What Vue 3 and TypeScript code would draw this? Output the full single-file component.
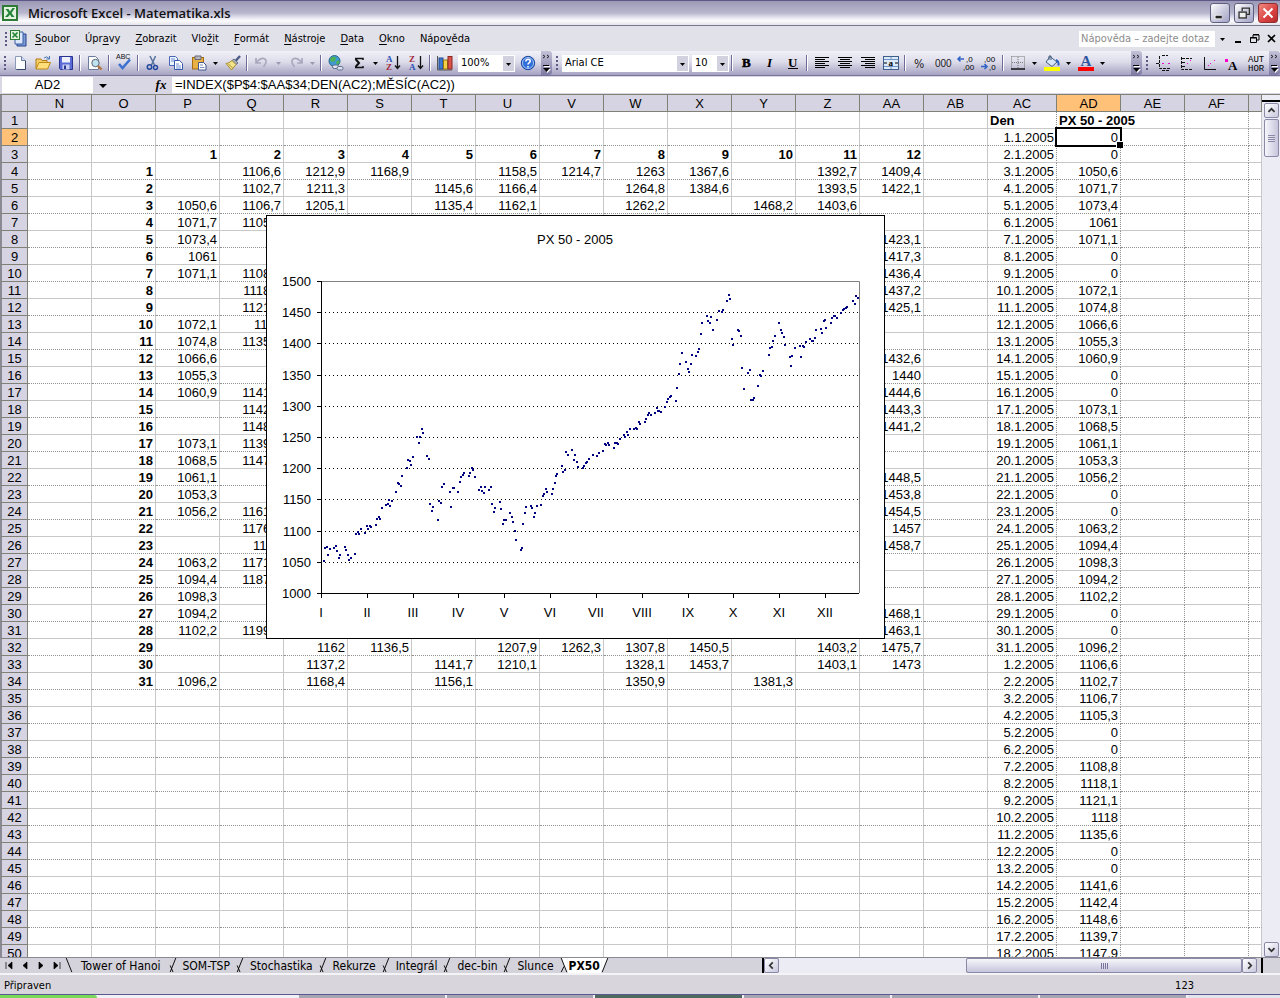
<script setup lang="ts">
interface Tool { kind: 'btn' | 'sep' | 'drop' | 'zoom' | 'font' | 'size' | 'more' | 'grip' | 'fill'; icon?: string; label?: string; dim?: boolean }

const b = (icon: string, label: string): Tool => ({ kind: 'btn', icon, label })
const sep: Tool = { kind: 'sep' }
const drop = (label: string, dim = false): Tool => ({ kind: 'drop', label, dim })

const tools: Tool[] = [
  { kind: 'grip' },
  b('new', 'Nový'), b('open', 'Otevřít'), b('save', 'Uložit'), sep,
  b('preview', 'Náhled'), sep, b('spell', 'Pravopis'), sep,
  b('cut', 'Vyjmout'), b('copy', 'Kopírovat'), b('paste', 'Vložit'), drop('Možnosti vložení'),
  b('brush', 'Kopírovat formát'), sep,
  b('undo', 'Zpět'), drop('Historie zpět', true), b('redo', 'Znovu'), drop('Historie znovu', true), sep,
  b('globe', 'Odkaz'), b('sum', 'Součet'), drop('Funkce'), b('az', 'Seřadit vzestupně'), b('za', 'Seřadit sestupně'), sep,
  b('chart', 'Průvodce grafem'), { kind: 'zoom' }, b('help', 'Nápověda'), { kind: 'more', label: 'Možnosti panelu Standardní' },
  { kind: 'grip' }, { kind: 'font' }, { kind: 'size' }, sep,
  b('bold', 'Tučné'), b('italic', 'Kurzíva'), b('underline', 'Podtržené'), sep,
  b('left', 'Vlevo'), b('center', 'Na střed'), b('right', 'Vpravo'), b('merge', 'Sloučit'), sep,
  b('percent', 'Procenta'), b('thousand', 'Tisíce'), b('decUp', 'Přidat desetinné místo'), b('decDown', 'Odebrat desetinné místo'), sep,
  b('border', 'Ohraničení'), drop('Styly ohraničení'), b('bucket', 'Barva výplně'), drop('Barvy výplně'),
  b('color', 'Barva písma'), drop('Barvy písma'), { kind: 'fill' }, { kind: 'more', label: 'Možnosti panelu Formát' },
  { kind: 'grip' }, b('plotA', 'Osy'), b('plotB', 'Mřížka'), b('plotC', 'Bez mřížky'), b('plotD', 'Popisek'), b('author', 'Autor'),
  { kind: 'more', label: 'Možnosti panelu' },
]

const sans = 'font-family="Liberation Sans, sans-serif"'
const serif = 'font-family="Liberation Serif, serif"'
const narrow = 'font-family="DejaVu Sans Condensed, sans-serif"'
const icons: Record<string, string> = {
  excel: '<rect x="1" y="1" width="14" height="14" fill="#e4f3df" stroke="#2d7b35" stroke-width="2"/><path d="M3.500 4h3L8 6.500 10.500 3H13L9.500 8l3 4h-3L8 9.500 6 12H3l3.500-4z" fill="#23853a"/>',
  book: '<path d="M7 4h9v12H7z" fill="#7d9bd8" stroke="#24428a"/><path d="M5 2h8v12H5z" fill="#dbe7fb" stroke="#3b5da5"/><rect x="0.500" y="0.500" width="9" height="9" fill="#e4f3df" stroke="#2d7b35"/><path d="M2.500 2.500l5 5M7.500 2.500l-5 5" stroke="#23853a" stroke-width="1.700"/>',
  new: '<path d="M3.500 1.500h6l4 4v9h-10z" fill="#fbfdff" stroke="#8c9ab8"/><path d="M9.500 1.500v4h4" fill="#cddcf2" stroke="#6b7b9b"/><path d="M13.500 6v8.500h-9" fill="none" stroke="#354569"/>',
  open: '<path d="M1 13.500V4h5l1 1.500h5V8" fill="#f6cf67" stroke="#b27a15"/><path d="M1 14l3-6.500h11.500L12.500 14z" fill="#ffdf7a" stroke="#c08618"/><path d="M9 3q3-2.500 5 .5M14.500 1v3h-3" fill="none" stroke="#4a74b4"/>',
  save: '<path d="M1.500 1.500h13v13h-12l-1-1z" fill="#5b6bd6" stroke="#2a3490"/><rect x="4" y="2" width="8" height="5.500" fill="#eef1fd"/><rect x="4.500" y="9.500" width="7" height="5" fill="#c9cff0"/><rect x="6" y="10.500" width="2" height="3.500" fill="#2a3490"/>',
  preview: '<path d="M1.500 1.500h7l3 3v10h-10z" fill="#fff" stroke="#6b7b9b"/><circle cx="8.500" cy="8" r="3.700" fill="#bfe3ef" stroke="#5c6675"/><path d="M11 11l3.500 3.500" stroke="#b5763b" stroke-width="2.400"/>',
  spell: `<text x="0" y="4" font-size="7" ${sans} fill="#111">ABC</text><path d="M3 9l3.500 4L14 4.500" fill="none" stroke="#3f72d0" stroke-width="2.600"/>`,
  cut: '<path d="M5 1l4.500 9M10.500 1L6.500 10" stroke="#56749d" stroke-width="1.500"/><circle cx="4.500" cy="12" r="2.200" fill="none" stroke="#22489d" stroke-width="1.500"/><circle cx="10.500" cy="12.500" r="2" fill="none" stroke="#22489d" stroke-width="1.500"/>',
  copy: '<path d="M1.500 1.500h6l2 2v7h-8z" fill="#eef4ff" stroke="#4766b5"/><path d="M6.500 5.500h5l3 3v6h-8z" fill="#fff" stroke="#3558ac"/><path d="M3 4h4M3 6h3M8 9h3M8 11h5M8 13h5" stroke="#6f8fd4"/>',
  paste: '<rect x="1.500" y="2.500" width="11" height="11.500" fill="#e9b044" stroke="#a36c13"/><path d="M4 1h6v3.500H4z" fill="#b8b8c4" stroke="#676775"/><path d="M7.500 7.500h5l2.500 2.500v5H7.500z" fill="#fff" stroke="#41578d"/><path d="M9 10h3M9 12.500h4.500" stroke="#7d8fbd"/>',
  brush: '<path d="M15 1l-4.500 5" stroke="#4b5b85" stroke-width="2.400"/><path d="M9 4l4 4-2 1.500-4-4z" fill="#aab0bf" stroke="#666f80"/><path d="M7 5.500L11 9.500 6.500 15 1 8.500q3 0 6-3z" fill="#f4e48a" stroke="#a58f31"/><path d="M3.500 9l4 4" stroke="#a58f31"/>',
  undo: '<path d="M2 3v5h5M2.500 7.500Q6 3 10 3.500q4.500 2-.5 8.500" fill="none" stroke="#a9a8bd" stroke-width="1.700"/>',
  redo: '<path d="M14 3v5H9M13.500 7.500Q10 3 6 3.500q-4.500 2 .5 8.500" fill="none" stroke="#a9a8bd" stroke-width="1.700"/>',
  globe: '<circle cx="6.500" cy="6" r="5.500" fill="#3f9ad1" stroke="#286c87"/><path d="M2.500 3q3.500-2.500 5.500 0l-1 3-3 1-2-2zM8 7l3-2 .5 3-2.500 2z" fill="#4fb155"/><rect x="4.500" y="10" width="6" height="3.500" rx="1.700" fill="#dde3ef" stroke="#5d6d8c"/><rect x="9" y="11.500" width="6" height="3.500" rx="1.700" fill="#dde3ef" stroke="#5d6d8c"/>',
  sum: '<path d="M4 3.500h8V5M12 11v1.500H4" fill="none" stroke="#111" stroke-width="1.500"/><path d="M4.500 4L8 8l-3.500 4" fill="none" stroke="#111" stroke-width="2"/>',
  az: `<text x="1" y="7" font-size="9" font-weight="bold" ${serif} fill="#2b50b5">A</text><text x="1" y="15" font-size="9" font-weight="bold" ${serif} fill="#a32d3e">Z</text><path d="M12.500 1v12M10 10.500l2.500 3 2.500-3" fill="none" stroke="#111" stroke-width="1.300"/>`,
  za: `<text x="1" y="7" font-size="9" font-weight="bold" ${serif} fill="#a32d3e">Z</text><text x="1" y="15" font-size="9" font-weight="bold" ${serif} fill="#2b50b5">A</text><path d="M12.500 1v12M10 10.500l2.500 3 2.500-3" fill="none" stroke="#111" stroke-width="1.300"/>`,
  chart: '<path d="M.5 1v14H15" fill="none" stroke="#555"/><rect x="2" y="3" width="4" height="11" fill="#3e7bd0" stroke="#234a8d"/><rect x="6.500" y="5" width="4" height="9" fill="#f3cf45" stroke="#9b7a12"/><rect x="11" y="1.500" width="4" height="12.500" fill="#d8534a" stroke="#8d2720"/>',
  help: '<circle cx="8" cy="8" r="6.700" fill="#2f6ed8" stroke="#1c479c"/><circle cx="8" cy="8" r="5.500" fill="none" stroke="#a8c5f5"/><path d="M5.800 6.500Q6 4.300 8.200 4.300q2.200.2 2 2-.2 1-1.500 1.800-.7.500-.7 1.400M8 11v1.500" fill="none" stroke="#fff" stroke-width="1.600"/>',
  bold: `<text x="3" y="12" font-size="13" font-weight="bold" ${serif} stroke="#000" stroke-width="0.500">B</text>`,
  italic: `<text x="5" y="12" font-size="13" font-weight="bold" font-style="italic" ${serif}>I</text>`,
  underline: `<text x="3" y="12" font-size="13" font-weight="bold" ${serif}>U</text><path d="M3 13.500h10" stroke="#000"/>`,
  left: '<path d="M1 2.500h14M1 4.500h10M1 6.500h14M1 8.500h10M1 10.500h14M1 12.500h10" stroke="#000"/>',
  center: '<path d="M1 2.500h14M3 4.500h10M1 6.500h14M3 8.500h10M1 10.500h14M3 12.500h10" stroke="#000"/>',
  right: '<path d="M1 2.500h14M5 4.500h10M1 6.500h14M5 8.500h10M1 10.500h14M5 12.500h10" stroke="#000"/>',
  merge: `<rect x=".5" y="1.500" width="15" height="13" fill="#dce9f8" stroke="#3e5f8e"/><path d="M1 4.500h14M1 11.500h14M8 2v3M8 11v3" stroke="#6d94c4"/><text x="5.500" y="10.500" font-size="9" font-weight="bold" ${serif}>a</text><path d="M1 8h3M12 8h3" stroke="#000"/>`,
  percent: `<text x="2" y="13" font-size="12" ${narrow} fill="#222">%</text>`,
  thousand: `<text x="0" y="12" font-size="10" ${sans} fill="#222">000</text>`,
  decUp: `<text x="8" y="7" font-size="8" ${sans}>,0</text><text x="5" y="15" font-size="8" ${sans}>,00</text><path d="M0 4h6M2.500 1.500L0 4l2.500 2.500" fill="none" stroke="#2f62c4" stroke-width="1.500"/>`,
  decDown: `<text x="3" y="7" font-size="8" ${sans}>,00</text><text x="8" y="15" font-size="8" ${sans}>,0</text><path d="M0 11.500h6M3.500 9L6 11.500 3.500 14" fill="none" stroke="#2f62c4" stroke-width="1.500"/>`,
  border: '<path d="M1.500 1.500h13v12M1.500 1.500v12M8 2v11M2 7.500h12" fill="none" stroke="#777" stroke-dasharray="1 1"/><path d="M1 14h14" stroke="#111" stroke-width="1.500"/>',
  bucket: '<path d="M6 1.500l7 5.500-5 4.500L2 7z" fill="#d9e6f6" stroke="#47607f"/><path d="M5 5V1h2v4" fill="none" stroke="#47607f"/><path d="M12 5q3 1 2.500 5.500" fill="none" stroke="#2c62c2" stroke-width="2"/><rect y="12" width="16" height="4" fill="#ff0"/>',
  color: `<text x="2.500" y="11" font-size="15" font-weight="bold" ${serif} fill="#30549d">A</text><rect y="12" width="16" height="4" fill="#f00"/>`,
  plotA: '<path d="M3.500 1v12.500H15M0 8.500h3M6 .5h6M6 15.500h7" fill="none" stroke="#111" stroke-dasharray="3 1"/><path d="M6 8.500h2M12 8.500h2" stroke="#e010d0"/>',
  plotB: '<path d="M2.500 2v12.500H14M3 3.500h10M3 7.500h3M3 11.500h3" fill="none" stroke="#111" stroke-dasharray="3 1"/><path d="M8 8.500h1M11 5.500h1" stroke="#e010d0"/>',
  plotC: '<path d="M2.500 2v12.500H14" fill="none" stroke="#111"/><path d="M6 10.500h1M8 8.500h1M12 5.500h1" stroke="#e010d0"/>',
  plotD: `<rect x="0" y="4" width="3" height="3" fill="#f0c"/><text x="3" y="15" font-size="13" font-weight="bold" ${serif}>A</text>`,
  author: `<text x="0" y="7" font-size="9" font-family="Liberation Mono, monospace">AUT</text><text x="0" y="16" font-size="9" font-family="Liberation Mono, monospace">HOR</text>`,
}

const menu: [string, string, string][] = [
  ['', 'S', 'oubor'], ['Úpr', 'a', 'vy'], ['', 'Z', 'obrazit'], ['Vlo', 'ž', 'it'], ['', 'F', 'ormát'],
  ['', 'N', 'ástroje'], ['', 'D', 'ata'], ['', 'O', 'kno'], ['Nápo', 'v', 'ěda'],
]

const columns = ['N', 'O', 'P', 'Q', 'R', 'S', 'T', 'U', 'V', 'W', 'X', 'Y', 'Z', 'AA', 'AB', 'AC', 'AD', 'AE', 'AF', '']
const months = ['P', 'Q', 'R', 'S', 'T', 'U', 'V', 'W', 'X', 'Y', 'Z', 'AA']

// Closing values by month column; keys are days of the month.
const quotes: Record<string, Record<number, string>> = {
  P: { 3: '1050,6', 4: '1071,7', 5: '1073,4', 6: '1061', 7: '1071,1', 10: '1072,1', 11: '1074,8', 12: '1066,6', 13: '1055,3', 14: '1060,9', 17: '1073,1', 18: '1068,5', 19: '1061,1', 20: '1053,3', 21: '1056,2', 24: '1063,2', 25: '1094,4', 26: '1098,3', 27: '1094,2', 28: '1102,2', 31: '1096,2' },
  Q: { 1: '1106,6', 2: '1102,7', 3: '1106,7', 4: '1105,3', 7: '1108,8', 8: '1118,1', 9: '1121,1', 10: '1118', 11: '1135,6', 14: '1141,6', 15: '1142,4', 16: '1148,6', 17: '1139,7', 18: '1147,9', 21: '1161,7', 22: '1176,3', 23: '1175', 24: '1171,6', 25: '1187,9', 28: '1199,8' },
  R: { 1: '1212,9', 2: '1211,3', 3: '1205,1', 29: '1162', 30: '1137,2', 31: '1168,4' },
  S: { 1: '1168,9', 29: '1136,5' },
  T: { 2: '1145,6', 3: '1135,4', 30: '1141,7', 31: '1156,1' },
  U: { 1: '1158,5', 2: '1166,4', 3: '1162,1', 29: '1207,9', 30: '1210,1' },
  V: { 1: '1214,7', 29: '1262,3' },
  W: { 1: '1263', 2: '1264,8', 3: '1262,2', 29: '1307,8', 30: '1328,1', 31: '1350,9' },
  X: { 1: '1367,6', 2: '1384,6', 29: '1450,5', 30: '1453,7' },
  Y: { 3: '1468,2', 31: '1381,3' },
  Z: { 1: '1392,7', 2: '1393,5', 3: '1403,6', 29: '1403,2', 30: '1403,1' },
  AA: { 1: '1409,4', 2: '1422,1', 5: '1423,1', 6: '1417,3', 7: '1436,4', 8: '1437,2', 9: '1425,1', 12: '1432,6', 13: '1440', 14: '1444,6', 15: '1443,3', 16: '1441,2', 19: '1448,5', 20: '1453,8', 21: '1454,5', 22: '1457', 23: '1458,7', 27: '1468,1', 28: '1463,1', 29: '1475,7', 30: '1473' },
}

function cell(col: string, row: number): string {
  if (col === 'AC' || col === 'AD') {
    if (row === 1) return col === 'AC' ? 'Den' : 'PX 50 - 2005'
    const n = row - 1
    const month = n > 31 ? 2 : 1
    const day = n > 31 ? n - 31 : n
    return col === 'AC' ? `${day}.${month}.2005` : quotes[month === 1 ? 'P' : 'Q'][day] ?? '0'
  }
  if (col === 'O') return row >= 4 && row <= 34 ? String(row - 3) : ''
  const m = months.indexOf(col)
  if (m < 0) return ''
  if (row === 3) return String(m + 1)
  return quotes[col][row - 3] ?? ''
}

function cellClass(col: string, row: number) {
  return {
    strong: col === 'O' || row === 3 && months.includes(col) || row === 1,
    text: row === 1,
    picked: col === 'AD' && row === 2,
    spill: col === 'AD' && row === 1,
    dots: ['AC', 'AD', 'AE', 'AF'].includes(col),
  }
}

const yTicks = [1500, 1450, 1400, 1350, 1300, 1250, 1200, 1150, 1100, 1050, 1000]
const yPos = (i: number) => 281 + Math.round(i * 31.2)
const xTicks: [string, number][] = [['I', 321], ['II', 367], ['III', 413], ['IV', 458], ['V', 504], ['VI', 550], ['VII', 596], ['VIII', 642], ['IX', 688], ['X', 733], ['XI', 779], ['XII', 825]]

const series = `323,560 324,547 326,546 327,554 329,548 333,547 335,545 336,550 338,557 339,554 344,546 345,549 347,554 348,559 350,557 354,553
355,533 357,531 358,533 360,528 364,532 366,525 367,528 369,525 370,526 375,524 376,518 378,516 379,518 381,507 385,504 387,503 388,499
389,505 391,500 395,491 397,482 398,483 400,485 401,475 406,467 407,459 409,460 410,464 412,456 416,436 418,442 419,436 421,428 422,432
426,455 428,458 429,503 431,510 432,506 437,519 438,500 440,502 441,486 443,483 449,491 450,506 452,487 453,487 457,491 459,481 460,476
462,474 463,472 468,475 469,472 471,467 472,469 474,476 478,489 480,486 481,490 483,492 484,486 488,489 490,486 491,503 493,511 494,507
499,501 500,508 502,523 503,519 505,519 509,512 511,516 512,521 514,530 515,539 520,549 521,547 522,523 524,512 525,506 530,505 531,507
533,516 534,512 536,505 540,504 542,495 543,493 545,488 546,491 551,493 552,488 554,482 555,475 556,473 561,465 562,471 564,469 565,451
567,454 571,449 573,459 574,454 576,461 577,466 582,467 583,465 585,462 586,461 588,458 592,454 596,455 598,452 602,450 604,443 605,444
607,442 608,444 613,447 614,442 616,442 617,443 619,438 623,434 624,436 626,431 627,434 629,428 633,428 635,427 636,428 638,421 639,423
644,421 645,418 647,414 648,412 650,414 654,412 656,407 657,410 658,410 660,411 664,406 666,401 667,398 669,396 670,395 675,400 676,387
678,373 679,363 681,352 685,361 687,368 688,371 690,363 691,354 695,355 697,351 698,348 700,333 701,322 706,315 707,320 709,322 710,316
712,329 716,319 718,310 721,311 722,309 726,300 728,294 729,298 731,338 732,344 737,329 738,330 740,335 741,367 743,388 747,372 749,369
750,399 752,399 753,397 757,385 759,374 760,375 762,370 768,354 769,347 771,346 772,340 774,335 778,322 780,329 781,332 783,336 784,344
789,356 790,365 791,355 794,347 799,345 800,356 802,345 803,346 805,341 809,338 811,340 812,340 814,337 815,329 820,328 821,332 823,320
824,319 825,327 830,322 831,317 833,315 834,315 836,317 840,312 842,309 843,308 845,307 846,306 852,300 854,303 855,295 857,297`
const points = series.split(/\s+/).map(p => p.split(',').map(Number))

const sheets = ['Tower of Hanoi', 'SOM-TSP', 'Stochastika', 'Rekurze', 'Integrál', 'dec-bin', 'Slunce']
const navs: [string, string][] = [
  ['První list', 'M1 1v7M7 1L3 4.500 7 8z'], ['Předchozí list', 'M6 1L2 4.500 6 8z'],
  ['Další list', 'M2 1l4 3.500L2 8z'], ['Poslední list', 'M1 1l4 3.500L1 8zM7 1v7'],
]
</script>

<template>
  <div class="window">
    <header class="title">
      <svg class="ico" viewBox="0 0 16 16" v-html="icons.excel" />
      <h1>Microsoft Excel - Matematika.xls</h1>
      <button class="win" aria-label="Minimalizovat"><svg viewBox="0 0 20 20"><path d="M4 14.500h8" stroke="#fff" stroke-width="5" /><path d="M5 14.500h7" stroke="#222" stroke-width="3" /></svg></button>
      <button class="win" aria-label="Obnovit"><svg viewBox="0 0 20 20"><path d="M8 8V4.500h8v7h-3" fill="none" stroke="#333" stroke-width="1.500" /><rect x="4.500" y="9" width="8" height="6.500" fill="#eee" stroke="#333" stroke-width="1.500" /></svg></button>
      <button class="win close" aria-label="Zavřít"><svg viewBox="0 0 20 20"><path d="M5 5l10 10M15 5L5 15" stroke="#fff" stroke-width="2.200" /></svg></button>
    </header>

    <nav class="menu">
      <i class="grip" />
      <svg class="book" viewBox="0 0 17 17" v-html="icons.book" />
      <button v-for="m in menu" :key="m.join('')" class="item">{{ m[0] }}<u>{{ m[1] }}</u>{{ m[2] }}</button>
      <input class="ask" aria-label="Dotaz" value="Nápověda – zadejte dotaz">
      <button class="mini slim" aria-label="Dotazy"><svg viewBox="0 0 11 11"><path d="M3 5h5L5.500 8z" /></svg></button>
      <button class="mini" aria-label="Minimalizovat sešit"><svg viewBox="0 0 11 11"><path d="M3 9h6" stroke="#000" stroke-width="2" /></svg></button>
      <button class="mini" aria-label="Obnovit sešit"><svg viewBox="0 0 11 11"><path d="M4 4V2h6v5H8M4 1.500h6" fill="none" stroke="#000" /><path d="M1.500 4.500h6v5h-6zM1 5h7" fill="none" stroke="#000" /></svg></button>
      <button class="mini" aria-label="Zavřít sešit"><svg viewBox="0 0 11 11"><path d="M2 2l7 7M9 2L2 9" stroke="#000" stroke-width="1.700" /></svg></button>
    </nav>

    <div class="tools">
      <template v-for="(t, i) in tools" :key="i">
        <i v-if="t.kind === 'grip'" class="grip" />
        <i v-else-if="t.kind === 'sep'" class="sep" />
        <i v-else-if="t.kind === 'fill'" class="fill" />
        <button v-else-if="t.kind === 'btn'" class="tool" :aria-label="t.label"><svg class="ico" viewBox="0 0 16 16" v-html="icons[t.icon!]" /></button>
        <button v-else-if="t.kind === 'drop'" class="drop" :class="{ dim: t.dim }" :aria-label="t.label"><svg viewBox="0 0 11 11"><path d="M3 4h5L5.500 7z" fill="currentColor" /></svg></button>
        <button v-else-if="t.kind === 'more'" class="more" :aria-label="t.label"><svg viewBox="0 0 11 24"><path d="M2 4l2 1.500L2 7M6 4l2 1.500L6 7" fill="none" stroke="#222" /><path d="M3 18h7l-3.500 4z" fill="#fff" /><path d="M2 17h7l-3.500 4z" /><path d="M3 15.500h6" stroke="#fff" /><path d="M2 14.500h6" stroke="#000" /></svg></button>
        <label v-else class="combo" :class="t.kind">
          <select :aria-label="t.kind === 'zoom' ? 'Lupa' : t.kind === 'font' ? 'Písmo' : 'Velikost písma'">
            <option>{{ t.kind === 'zoom' ? '100%' : t.kind === 'font' ? 'Arial CE' : '10' }}</option>
          </select>
          <svg viewBox="0 0 11 15"><path d="M3 7h5L5.500 10z" /></svg>
        </label>
      </template>
    </div>

    <div class="formula">
      <input class="name" aria-label="Pole názvů" value="AD2">
      <button class="pick" aria-label="Seznam názvů"><svg viewBox="0 0 20 17"><path d="M6 7h8l-4 4z" /></svg></button>
      <button class="fx" aria-label="Vložit funkci">fx</button>
      <input class="expr" aria-label="Řádek vzorců" value="=INDEX($P$4:$AA$34;DEN(AC2);MĚSÍC(AC2))">
    </div>

    <main class="body">
      <div class="grid">
        <table>
          <colgroup>
            <col class="c-head"><col v-for="c in columns" :key="c" :class="c === 'AC' ? 'c-date' : c ? 'c-std' : 'c-rest'">
          </colgroup>
          <thead>
            <tr><th class="corner" /><th v-for="c in columns" :key="c" :class="{ on: c === 'AD' }" scope="col">{{ c }}</th></tr>
          </thead>
          <tbody>
            <tr v-for="r in 50" :key="r">
              <th :class="{ on: r === 2 }" scope="row">{{ r }}</th>
              <td v-for="c in columns" :key="c" :class="cellClass(c, r)">{{ cell(c, r) }}</td>
            </tr>
          </tbody>
        </table>

        <svg class="plot" viewBox="266 215 619 424" role="img" aria-label="PX 50 - 2005">
          <rect x="266.500" y="215.500" width="618" height="423" fill="#fff" stroke="#000" />
          <text x="575" y="244" text-anchor="middle">PX 50 - 2005</text>
          <path d="M321 281.500h538.500V593" fill="none" stroke="#808080" />
          <g v-for="(v, i) in yTicks" :key="v">
            <path v-if="i > 0 && i < 10" :d="`M325 ${yPos(i) + 0.5}H858`" stroke="#000" stroke-dasharray="1 3" />
            <path :d="`M317 ${yPos(i) + 0.5}h5`" stroke="#000" />
            <text x="311" :y="yPos(i) + 5" text-anchor="end">{{ v }}</text>
          </g>
          <path d="M321.500 281v313M321 593.500h538" fill="none" stroke="#000" />
          <g v-for="t in xTicks" :key="t[0]">
            <path :d="`M${t[1] + 0.5} 594v4`" stroke="#000" />
            <text :x="t[1]" y="617" text-anchor="middle">{{ t[0] }}</text>
          </g>
          <rect v-for="(p, i) in points" :key="i" :x="p[0]" :y="p[1]" width="2" height="2" fill="#000080" />
        </svg>
      </div>

      <div class="vbar">
        <i class="split" />
        <button class="sbtn" aria-label="Nahoru"><svg viewBox="0 0 15 15"><path d="M4 9l3.500-3.500L11 9" fill="none" stroke="#333" stroke-width="2" /></svg></button>
        <div class="vthumb"><i /><i /><i /><i /></div>
        <i class="fill" />
        <button class="sbtn" aria-label="Dolů"><svg viewBox="0 0 15 15"><path d="M4 6l3.500 3.500L11 6" fill="none" stroke="#333" stroke-width="2" /></svg></button>
      </div>
    </main>

    <div class="sheets">
      <div class="tabs">
        <button v-for="n in navs" :key="n[0]" class="nav" :aria-label="n[0]"><svg viewBox="0 0 8 9"><path :d="n[1]" stroke="#000" stroke-width=".7" /></svg></button>
        <svg class="edge" viewBox="0 0 8 16"><path d="M1 0l6 15" stroke="#000" /></svg>
        <template v-for="(s, i) in sheets" :key="s">
          <button class="tab" :class="{ first: i === 0 }">{{ s }}</button>
          <svg v-if="i < sheets.length - 1" class="edge" viewBox="0 0 8 16"><path d="M7 0L1 15M1 8l3 7" stroke="#000" fill="none" /></svg>
        </template>
        <svg class="edge" viewBox="0 0 8 16"><path d="M1 0h7v15H7z" fill="#fff" /><path d="M1 0l6 15M1 15l3-6" stroke="#000" /></svg>
        <button class="tab current">PX50</button>
        <svg class="edge" viewBox="0 0 8 16"><path d="M0 0h7L1 15H0z" fill="#fff" /><path d="M7 0L1 15" stroke="#000" /></svg>
      </div>
      <div class="hbar">
        <i class="stop" />
        <button class="sbtn" aria-label="Vlevo"><svg viewBox="0 0 15 15"><path d="M9 4L5.500 7.500 9 11" fill="none" stroke="#333" stroke-width="2" /></svg></button>
        <i class="track" />
        <div class="hthumb"><i /><i /><i /><i /></div>
        <button class="sbtn" aria-label="Vpravo"><svg viewBox="0 0 15 15"><path d="M6 4l3.500 3.500L6 11" fill="none" stroke="#333" stroke-width="2" /></svg></button>
        <i class="stop end" />
      </div>
    </div>

    <footer class="status"><span>Připraven</span><span>123</span></footer>
    <div class="task"><i class="start" /><i /><i /><i class="dark" /><i /><i /><i /><i class="tray" /></div>
  </div>
</template>

<style>
html, body { margin: 0; overflow: hidden; }
</style>

<style scoped>
* { box-sizing: border-box; }
.window { height: 100vh; display: flex; flex-direction: column; background: #d9d7e3; color: #000; font: 11px/14px "DejaVu Sans Condensed", "DejaVu Sans", sans-serif; }
button, input, select { margin: 0; padding: 0; border: 0; background: none; font: inherit; color: inherit; border-radius: 0; }
button { display: flex; align-items: center; justify-content: center; flex: none; }
svg { display: block; flex: none; }
.ico { width: 16px; height: 16px; }
.fill { flex: 1; }

.title { flex: none; height: 26px; display: flex; align-items: center; gap: 4px; padding: 0 2px; border-top: 1px solid #5b5888; border-bottom: 1px solid #77758f; background: linear-gradient(#9c99b6, #b9b7ce 50%, #dddcea 66%, #fbfbfd 82%, #e4e4ea); }
.title h1 { flex: 1; margin: 0 0 0 6px; font: 600 13px/18px "Open Sans", "Noto Sans", sans-serif; color: #111; }
.win { width: 20px; height: 20px; border: 1px solid #5e6082; border-radius: 3px; background: linear-gradient(135deg, #fff, #c4c4da 60%, #a2a2c6); }
.win svg { width: 18px; height: 18px; }
.close { border-color: #8f3030; background: linear-gradient(135deg, #f08a80, #d94040 60%, #b52c2c); }

.menu { flex: none; height: 25px; display: flex; align-items: center; padding-left: 4px; background: #e1e1ea; }
.grip { flex: none; width: 3px; height: 14px; background: repeating-linear-gradient(#5c5a85 0 2px, transparent 2px 4px) no-repeat 0 0 / 2px 14px; }
.menu .grip { margin: 0 2px 0 1px; }
.book { width: 17px; height: 17px; margin-right: 1px; }
.item { padding: 0 8px 0 7px; }
.item u { text-underline-offset: 2px; }
.ask { width: 136px; height: 16px; margin-left: auto; padding: 0 2px; background: #fff; color: #8c8c8c; }
.mini { width: 17px; height: 16px; }
.slim { width: 14px; }
.mini svg { width: 11px; height: 11px; }

.tools { flex: none; height: 25px; display: flex; align-items: center; background: linear-gradient(#f1f1f8, #dddcea 45%, #a5a2c2); border-bottom: 1px solid #77759c; }
.tools .grip { margin: 0 1px 0 4px; }
.tools .more + .grip { margin-right: 3px; }
.tool { width: 23px; height: 22px; }
.tool svg { overflow: visible; }
.sep { flex: none; width: 2px; height: 16px; margin: 0 2px; background: linear-gradient(90deg, #6e6b96 50%, #fff 50%); }
.drop { width: 11px; height: 22px; }
.drop svg { width: 11px; height: 11px; }
.dim { color: #9b99b0; }
.more { width: 11px; height: 24px; margin-left: 2px; border-radius: 0 3px 3px 0; background: linear-gradient(#c4c2d8, #7e7ba4); }
.more svg { width: 11px; height: 24px; }
.combo { position: relative; flex: none; height: 17px; background: #fff; }
.combo select { width: 100%; height: 17px; padding-left: 3px; appearance: none; }
.combo svg { position: absolute; right: 1px; top: 1px; width: 11px; height: 15px; background: #d2d1e0; pointer-events: none; }
.zoom { width: 57px; margin: 0 1px 0 2px; }
.font { width: 127px; margin-right: 3px; }
.size { width: 37px; }

.formula { flex: none; height: 19px; display: flex; align-items: stretch; padding: 1px 0 1px 2px; border-bottom: 1px solid #808074; background: #d9d7e3; font: 13px/16px "Liberation Sans", Arial, sans-serif; }
.name { width: 91px; background: #fff; text-align: center; }
.pick { width: 20px; }
.pick svg { width: 20px; height: 17px; }
.fx { width: 22px; margin-left: 37px; font: italic bold 13px/14px "Liberation Serif", serif; }
.expr { flex: 1; min-width: 0; padding-left: 3px; background: #fff; }

.body { flex: 1; min-height: 0; display: flex; }
.grid { position: relative; flex: 1; min-width: 0; overflow: hidden; background: #fff; font: 13px/14px "Liberation Sans", Arial, sans-serif; }
table { width: 100%; table-layout: fixed; border-collapse: separate; border-spacing: 0; }
.c-head { width: 28px; }
.c-std { width: 64px; }
.c-date { width: 69px; }
th, td { height: 17px; padding: 2px 2px 0; border-right: 1px solid #c8c8c8; border-bottom: 1px solid #c8c8c8; white-space: nowrap; font-weight: 400; }
th { padding: 2px 0 0; text-align: center; background: #d6d4e2; border-color: #808074; }
tbody th, .corner { border-left: 2px solid #8a8a94; }
th.on { background: #ffc078; }
td { text-align: right; }
tr:nth-child(even) td { border-bottom: 1px dotted #909090; }
.strong { font-weight: 700; }
.text { text-align: left; }
.dots { border-right: 1px dotted #909090; }
.spill { border-right-color: transparent; }
.picked { position: relative; }
.picked::before { content: ""; position: absolute; inset: -2px; border: 2px solid #000; }
.picked::after { content: ""; position: absolute; right: -3px; bottom: -3px; width: 6px; height: 6px; background: #000; border: 1px solid #fff; border-right: 0; border-bottom: 0; }
.plot { position: absolute; left: 266px; top: 120px; width: 619px; height: 424px; }

.vbar { flex: none; width: 18px; display: flex; flex-direction: column; align-items: center; background: #ececf4; padding-top: 5px; }
.split { width: 100%; height: 2px; background: #000; margin-bottom: 1px; }
.sbtn { width: 15px; height: 15px; border: 1px solid #8b89a8; border-radius: 2px; background: linear-gradient(135deg, #fff, #c9c8de); }
.sbtn svg { width: 13px; height: 13px; }
.vthumb { width: 15px; height: 38px; margin-top: 1px; border: 1px solid #8b89a8; border-radius: 2px; background: linear-gradient(90deg, #f6f6fb, #c6c5dc); display: flex; flex-direction: column; align-items: center; justify-content: center; gap: 1px; }
.vthumb i { width: 7px; height: 1px; background: #8b89a8; }

.sheets { flex: none; height: 17px; display: flex; background: #d4d2da; border-top: 1px solid #8a8a94; border-bottom: 1px solid #f4f4f6; }
.tabs { flex: 762 1 0; display: flex; align-items: stretch; font-size: 12px; line-height: 14px; padding-left: 1px; }
.nav { width: 16px; }
.nav svg { width: 8px; height: 9px; }
.edge { width: 8px; height: 15px; }
.tab { padding: 0 6px; }
.first { padding: 0 8px; }
.current { background: #fff; font-weight: 700; padding: 0 1px; }
.hbar { flex: 518 1 0; display: flex; align-items: stretch; }
.stop { width: 2px; background: #000; }
.stop.end { margin-left: 4px; margin-right: 17px; }
.track { flex: 15; background: #ececf4; }
.hthumb { flex: 22; border: 1px solid #8b89a8; border-radius: 2px; background: linear-gradient(#f6f6fb, #c6c5dc); display: flex; align-items: center; justify-content: center; gap: 1px; }
.hthumb i { width: 1px; height: 6px; background: #77759c; }

.status { flex: none; height: 20px; display: flex; align-items: center; justify-content: space-between; padding: 3px 86px 0 4px; border-top: 1px solid #f4f4f6; background: #d8d6dc; }
.task { flex: none; height: 4px; display: flex; gap: 2px; border-top: 1px solid #5a5890; background: #f0f0f5; }
.task i { flex: 1; background: #a6a5b4; }
.task .start { flex: none; width: 97px; margin-right: 200px; background: #78d858; border-radius: 0 3px 0 0; }
.task .dark { background: #4f6a5e; }
.task .tray { flex: none; width: 92px; background: #e4e4ec; }
</style>
